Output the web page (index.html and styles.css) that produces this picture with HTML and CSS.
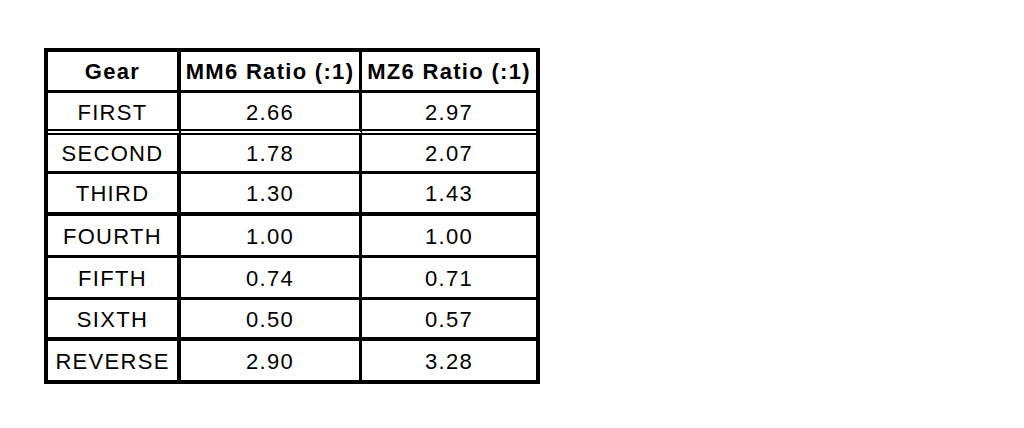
FILE: index.html
```html
<!DOCTYPE html>
<html lang="en">
<head>
    <meta charset="UTF-8">
    <title>Gear Ratios</title>
    <link rel="stylesheet" href="styles.css">
</head>
<body>
    <table class="ratios">
        <tr class="head">
            <th class="gear">Gear</th>
            <th class="mm6">MM6 Ratio (:1)</th>
            <th class="mz6">MZ6 Ratio (:1)</th>
        </tr>
        <tr class="r-first">
            <td class="gear">FIRST</td><td class="mm6">2.66</td><td class="mz6">2.97</td>
        </tr>
        <tr class="r-second">
            <td class="gear">SECOND</td><td class="mm6">1.78</td><td class="mz6">2.07</td>
        </tr>
        <tr class="r-third">
            <td class="gear">THIRD</td><td class="mm6">1.30</td><td class="mz6">1.43</td>
        </tr>
        <tr class="r-fourth">
            <td class="gear">FOURTH</td><td class="mm6">1.00</td><td class="mz6">1.00</td>
        </tr>
        <tr class="r-fifth">
            <td class="gear">FIFTH</td><td class="mm6">0.74</td><td class="mz6">0.71</td>
        </tr>
        <tr class="r-sixth">
            <td class="gear">SIXTH</td><td class="mm6">0.50</td><td class="mz6">0.57</td>
        </tr>
        <tr class="r-reverse">
            <td class="gear">REVERSE</td><td class="mm6">2.90</td><td class="mz6">3.28</td>
        </tr>
    </table>
</body>
</html>
```
FILE: styles.css
```css
body{
    margin: 0;
    background: #fff;
    font-family: "Liberation Sans", Arial, sans-serif;
    color: #000;
}
.ratios{
    margin: 48px 0 0 44px;
    border: 4px solid #000;
    border-spacing: 0;
    table-layout: fixed;
}
.ratios th,
.ratios td{
    box-sizing: border-box;
    padding: 2px 0 0;
    text-align: center;
    vertical-align: middle;
    font-size: 22px;
    letter-spacing: 1.3px;
    line-height: 1;
    white-space: nowrap;
    border-bottom: 3px solid #000;
}
.ratios th{
    font-weight: bold;
    padding-top: 1px;
}
.gear{
    width: 133px;
    border-right: 4px solid #000;
}
.mm6{
    width: 181px;
    border-right: 3px solid #000;
}
.mz6{
    width: 174px;
}
.head th{ height: 41px; }
.r-first td{
    height: 42px;
    padding-top: 4px;
    border-bottom: 6px double #000;
}
.r-second td{ height: 39px; }
.r-third td{
    height: 42px;
    border-bottom-width: 4px;
}
.r-fourth td{ height: 42px; }
.r-fifth td{ height: 42px; }
.r-sixth td{
    height: 41px;
    border-bottom-width: 4px;
}
.r-reverse td{
    height: 39px;
    border-bottom: none;
}
```
